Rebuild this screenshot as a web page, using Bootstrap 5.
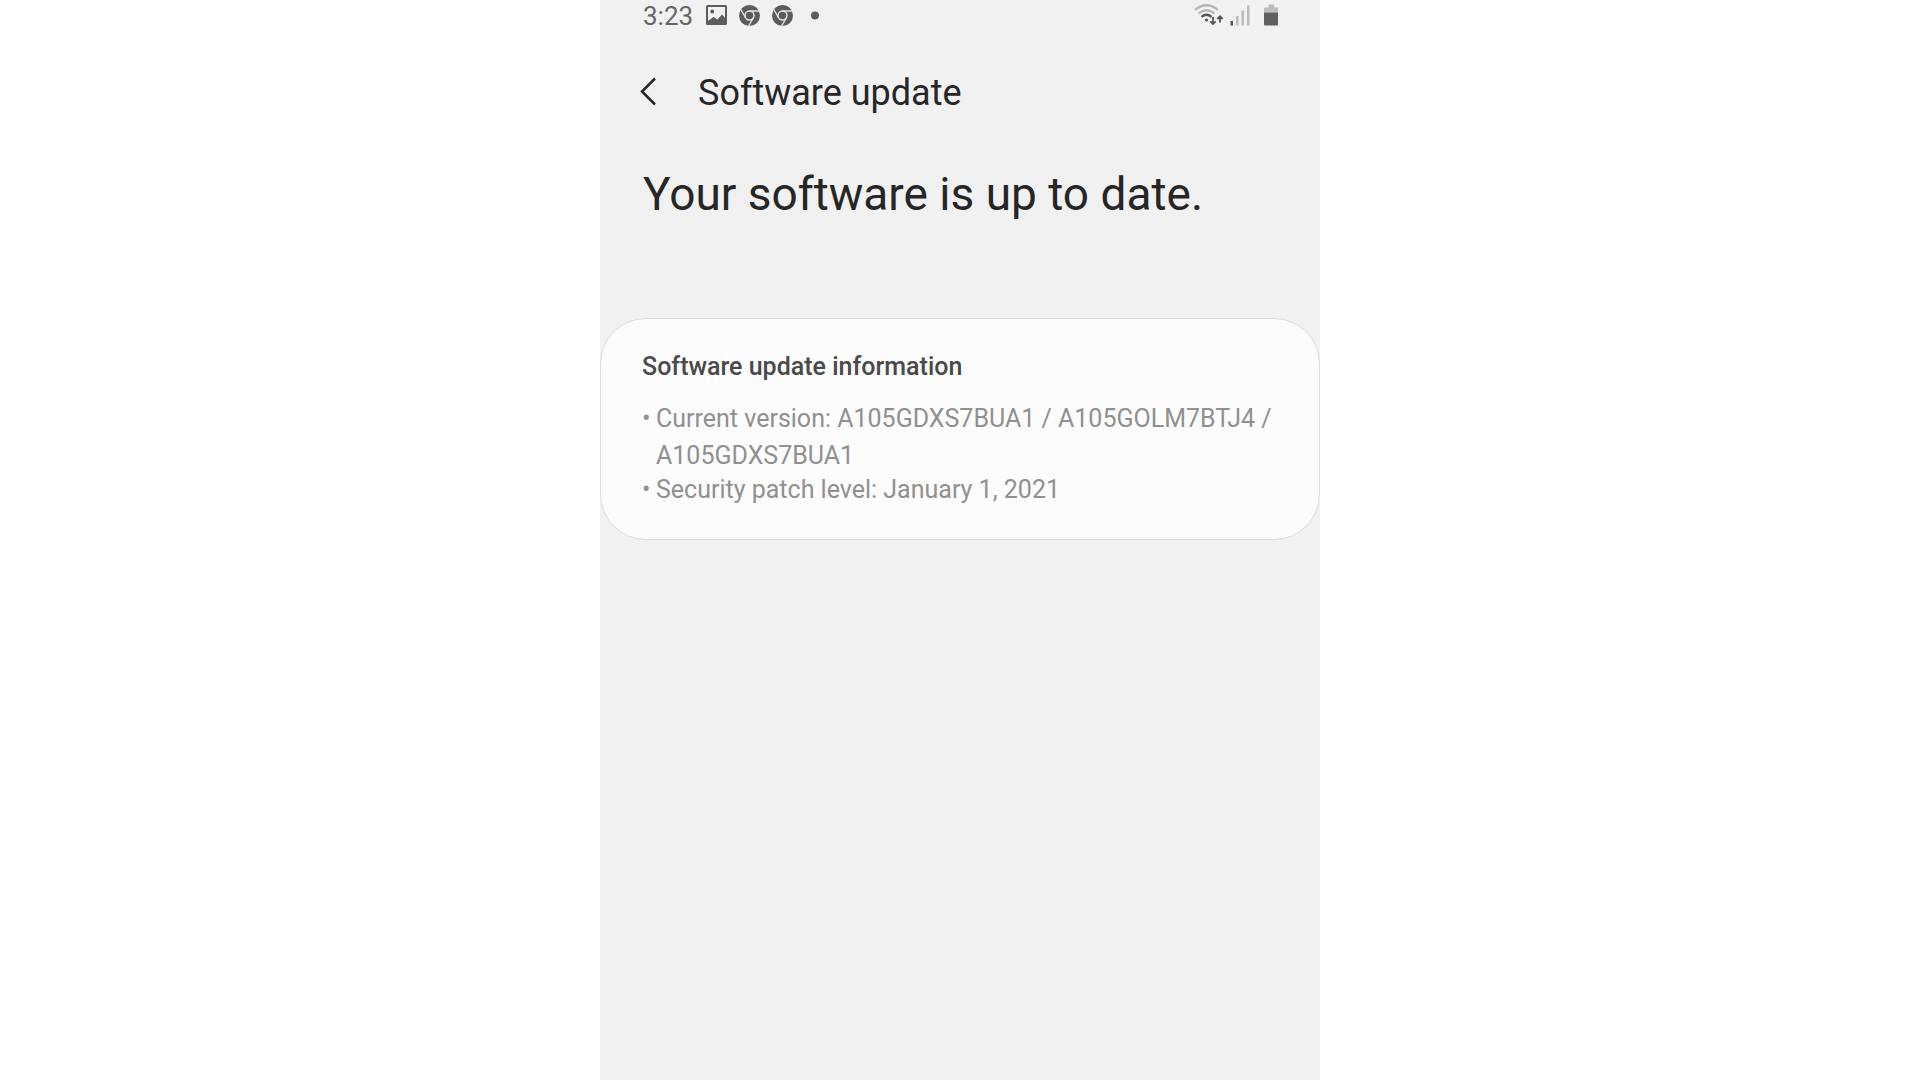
<!DOCTYPE html>
<html lang="en">
<head>
<meta charset="utf-8">
<meta name="viewport" content="width=device-width, initial-scale=1">
<title>Software update</title>
<link href="https://cdn.jsdelivr.net/npm/bootstrap@5.3.0/dist/css/bootstrap.min.css" rel="stylesheet">
<style>
body { font-family: Roboto, "Liberation Sans", sans-serif; background: #fff; color: #262626; }
.phone { max-width: 720px; background: #f1f1f1; }
.status-bar { height: 32px; padding: 0 40px 0 43px; color: #666; font-size: 26px; line-height: 32px; }
.status-icons { gap: 12px; margin-left: 13px; padding-bottom: 2px; }
.app-bar { height: 122px; padding: 0 32px; gap: 32px; }
.back-btn { width: 34px; color: #262626; line-height: 1; }
.app-title { font-size: 36px; line-height: 48px; }
.headline { font-size: 46px; line-height: 56px; padding: 12px 43px 96px; }
.info-card { background: #fcfcfc; border: 1px solid #dcdcdc; border-radius: 46px; padding: 29px 41px 34px; font-size: 25px; line-height: 37px; }
.info-title { font-size: 25px; line-height: 37px; font-weight: 500; color: #4a4a4a; margin-bottom: 15px; }
.info-list { color: #909090; }
.info-list li { display: flex; }
.info-list li::before { content: "•"; flex: 0 0 14px; }
.info-list li:last-child { line-height: 31px; }
</style>
<script src="https://cdn.jsdelivr.net/npm/bootstrap@5.3.0/dist/js/bootstrap.bundle.min.js" defer></script>
</head>
<body>
<div class="phone min-vh-100 mx-auto">
  <div class="status-bar d-flex align-items-center justify-content-between">
    <div class="d-flex align-items-center">
      <span>3:23</span>
      <div class="status-icons d-flex align-items-center">
        <svg width="21" height="21" viewBox="0 0 21 21" aria-hidden="true"><path fill="#5c5c5c" fill-rule="evenodd" d="M1.500 0h18q1.500 0 1.500 1.500v17q0 1.500-1.500 1.500h-18q-1.500 0-1.500-1.500v-17q0-1.500 1.500-1.500zM2 2v14l5.500-4 4 2.500 4.500-5 3 3.500V2zM4.200 6.500a2 2 0 1 0 4 0a2 2 0 1 0-4 0z"/></svg>
        <svg width="21" height="21" viewBox="0 0 21 21" aria-hidden="true"><circle cx="10.500" cy="10.500" r="10.500" fill="#5c5c5c"/><g fill="none" stroke="#e4e4e4" stroke-width="1.400"><circle cx="10.500" cy="10.500" r="4.500"/><path d="M10.500 6H20M6.600 12.750L1.800 4.500M14.400 12.750L9.600 21"/></g></svg>
        <svg width="21" height="21" viewBox="0 0 21 21" aria-hidden="true"><circle cx="10.500" cy="10.500" r="10.500" fill="#5c5c5c"/><g fill="none" stroke="#e4e4e4" stroke-width="1.400"><circle cx="10.500" cy="10.500" r="4.500"/><path d="M10.500 6H20M6.600 12.750L1.800 4.500M14.400 12.750L9.600 21"/></g></svg>
        <svg width="21" height="21" viewBox="0 0 21 21" aria-hidden="true"><circle cx="10" cy="10.500" r="4" fill="#5c5c5c"/></svg>
      </div>
    </div>
    <svg width="86" height="24" viewBox="0 0 86 24" role="img" aria-label="Wi-Fi, signal and battery">
      <g fill="none" stroke-width="2.200">
        <path stroke="#b5b5b5" d="M1 6Q12.500-3.500 24 6M4.500 9.500Q12.500 3 20.500 9.500"/>
        <path stroke="#555" stroke-width="2.400" d="M7.500 12.800Q12.500 8.500 17.500 12.800"/>
      </g>
      <circle cx="12.500" cy="16" r="1.600" fill="#555"/>
      <path fill="none" stroke="#555" stroke-width="1.800" d="M19 13v7M16.300 17.300L19 20l2.700-2.700M26 18.500v-6M23.300 15L26 12.300l2.700 2.700"/>
      <path fill="#555" d="M36.500 17h2.500v4.500h-2.500z"/>
      <path fill="#bcbcbc" d="M42 12h2.500v9.500H42zM47.500 6.500H50v15h-2.500zM53 1.500h2.500v20H53z"/>
      <path fill="#bcbcbc" d="M74.500 0.500h5.500v3h4v5H70v-5h4.500z"/>
      <path fill="#606060" d="M70 8.500h14v12q0 1-1 1H71q-1 0-1-1z"/>
    </svg>
  </div>
  <header class="app-bar d-flex align-items-center">
    <button type="button" class="back-btn btn border-0 p-0" aria-label="Back">
      <svg width="34" height="34" viewBox="0 0 34 34" fill="none" stroke="currentColor" stroke-width="2.500"><path d="M23 2.500L10 15.500l13 13"/></svg>
    </button>
    <h1 class="app-title fw-normal mb-0">Software update</h1>
  </header>
  <main>
    <h2 class="headline fw-normal mb-0">Your software is up to date.</h2>
    <section class="info-card">
      <h3 class="info-title">Software update information</h3>
      <ul class="info-list list-unstyled mb-0">
        <li><span>Current version: A105GDXS7BUA1 / A105GOLM7BTJ4 / A105GDXS7BUA1</span></li>
        <li><span>Security patch level: January 1, 2021</span></li>
      </ul>
    </section>
  </main>
</div>
</body>
</html>
